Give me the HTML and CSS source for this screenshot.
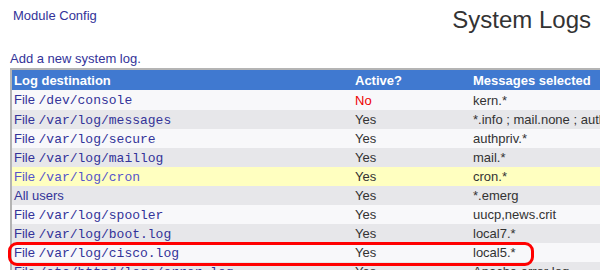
FILE: index.html
```html
<!DOCTYPE html>
<html lang="en">
<head>
    <meta charset="UTF-8">
    <title>System Logs</title>
    <link rel="stylesheet" href="styles.css">
</head>
<body>
<div class="page">
    <div class="top-bar">
        <a class="module-link" href="#">Module Config</a>
        <h1>System Logs</h1>
    </div>

    <a class="add-link" href="#">Add a new system log.</a>

    <table class="logs">
        <colgroup>
            <col class="col-dest">
            <col class="col-active">
            <col class="col-msg">
        </colgroup>
        <thead>
        <tr>
            <th>Log destination</th>
            <th>Active?</th>
            <th>Messages selected</th>
        </tr>
        </thead>
        <tbody>
        <tr>
            <td><a href="#">File <code>/dev/console</code></a></td>
            <td class="no">No</td>
            <td>kern.*</td>
        </tr>
        <tr>
            <td><a href="#">File <code>/var/log/messages</code></a></td>
            <td>Yes</td>
            <td>*.info ; mail.none ; authpriv.none ; cron.none</td>
        </tr>
        <tr>
            <td><a href="#">File <code>/var/log/secure</code></a></td>
            <td>Yes</td>
            <td>authpriv.*</td>
        </tr>
        <tr>
            <td><a href="#">File <code>/var/log/maillog</code></a></td>
            <td>Yes</td>
            <td>mail.*</td>
        </tr>
        <tr class="hover">
            <td><a href="#">File <code>/var/log/cron</code></a></td>
            <td>Yes</td>
            <td>cron.*</td>
        </tr>
        <tr>
            <td><a href="#">All users</a></td>
            <td>Yes</td>
            <td>*.emerg</td>
        </tr>
        <tr>
            <td><a href="#">File <code>/var/log/spooler</code></a></td>
            <td>Yes</td>
            <td>uucp,news.crit</td>
        </tr>
        <tr>
            <td><a href="#">File <code>/var/log/boot.log</code></a></td>
            <td>Yes</td>
            <td>local7.*</td>
        </tr>
        <tr>
            <td><a href="#">File <code>/var/log/cisco.log</code></a></td>
            <td>Yes</td>
            <td>local5.*</td>
        </tr>
        <tr>
            <td><a href="#">File <code>/etc/httpd/logs/error_log</code></a></td>
            <td>Yes</td>
            <td>Apache error log</td>
        </tr>
        </tbody>
    </table>

    <!-- hand-drawn marker around the cisco row -->
    <div class="marker"></div>
</div>
</body>
</html>
```

FILE: styles.css
```css
body {
    margin: 0;
    background: #fff;
    font-family: "Liberation Sans", Arial, sans-serif;
    font-size: 13px;
    color: #333;
}

a {
    color: #333399;
    text-decoration: none;
}

.page {
    position: relative;
    width: 600px;
    height: 270px;
    overflow: hidden;
}

.top-bar {
    display: flex;
    justify-content: space-between;
    align-items: flex-start;
    padding: 6px 9px 0 13px;
}

.module-link {
    margin-top: 2px;
    line-height: 16px;
}

h1 {
    margin: 0;
    font-size: 24px;
    font-weight: normal;
    line-height: 28px;
    color: #333;
}

.add-link {
    display: block;
    margin: 17px 0 1px 10px;
    line-height: 16px;
}

/* Table */
.logs {
    width: 640px;
    margin-left: 10px;
    table-layout: fixed;
    border-collapse: separate;
    border-spacing: 0;
    border: 2px solid #b4b4b4;
}

.col-dest {
    width: 341px;
}

.col-active {
    width: 118px;
}

.logs th {
    height: 20px;
    padding: 0 2px;
    background-color: #4079d0;
    color: #fff;
    font-weight: bold;
    text-align: left;
}

.logs td {
    height: 19px;
    padding: 0 2px;
    white-space: nowrap;
    overflow: hidden;
}

.logs tbody tr:first-child td {
    height: 20px;
}

.logs tbody tr:nth-child(odd) {
    background-color: #f8f8fa;
}

.logs tbody tr:nth-child(even) {
    background-color: #e7e7ea;
}

.logs tbody tr.hover {
    background-color: #ffffc0;
}

.logs tr.hover a {
    color: #5555cc;
}

.logs code {
    font-family: "Liberation Mono", "Courier New", monospace;
    font-size: 13px;
}

.no {
    color: #ee0000;
}

.marker {
    position: absolute;
    left: 8px;
    top: 242px;
    width: 520px;
    height: 18px;
    border: 3px solid #ff0000;
    border-radius: 9px;
}
```
